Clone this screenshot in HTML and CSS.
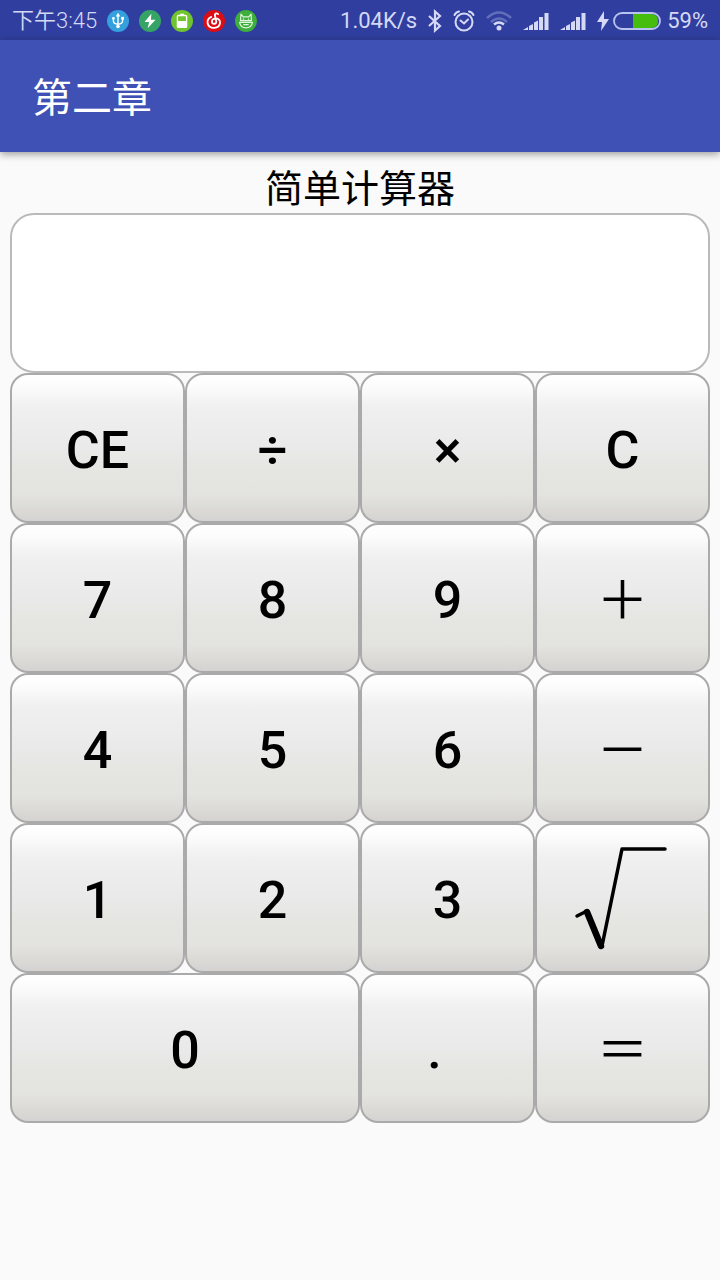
FILE: index.html
```
<!DOCTYPE html>
<html lang="zh-CN">
  <head>
    <meta charset="UTF-8" />
    <meta name="viewport" content="width=device-width, initial-scale=1" />
    <title>第二章</title>
    <link rel="stylesheet" href="styles.css">
  </head>
  <body>
    <div class="status-bar">
      <div class="status-left">
        <span class="clock">下午3:45</span>
        <svg class="app-icon" viewBox="0 0 24 24">
          <circle cx="12" cy="12" r="12" fill="#35a0de" />
          <g fill="none" stroke="#fff" stroke-width="1.5">
            <path d="M12 5v14M7 9v3q0 3 5 3.500q5-.5 5-3.500V9" />
          </g>
          <path d="M12 3l2.500 4h-5z" fill="#fff" />
          <circle cx="12" cy="18" r="2" fill="#fff" />
          <circle cx="7" cy="9" r="1.500" fill="#fff" />
          <path d="M15.500 7.500h3v3h-3z" fill="#fff" />
        </svg>
        <svg class="app-icon" viewBox="0 0 24 24">
          <circle cx="12" cy="12" r="12" fill="#36a465" />
          <path d="M13.500 4L6 13h5l-1.500 7L18 10.500h-5z" fill="#fff" />
        </svg>
        <svg class="app-icon" viewBox="0 0 24 24">
          <circle cx="12" cy="12" r="12" fill="#70c42e" />
          <path d="M10 4h4v2h-4z" fill="#fff" />
          <rect x="7" y="6" width="10" height="13" rx="1" fill="none" stroke="#fff" stroke-width="1.500" />
          <path d="M7 12h10v7H7z" fill="#fff" />
        </svg>
        <svg class="app-icon" viewBox="0 0 24 24">
          <circle cx="12" cy="12" r="12" fill="#dc0d15" />
          <path d="M16.500 4.500c-2-1.500-4-.5-3.500 1.500l1.500 6.500c.6 3-4.500 3.500-4.800.3C9.500 10 13 8.500 16 9.500c4 2 3.500 9.500-3.500 10C4 20 2.500 10.500 9 7.500" fill="none" stroke="#fff" stroke-width="2" stroke-linecap="round" />
        </svg>
        <svg class="app-icon" viewBox="0 0 24 24">
          <circle cx="12" cy="12" r="12" fill="#3eae3c" />
          <path d="M6.500 4.500l2.500 3h6l2.500-3 .5 7H6z M5 13.500h14q-1 6-7 6t-7-6z" fill="none" stroke="#dff5dc" stroke-width="1.300" stroke-linejoin="round" />
          <path d="M8.500 10h1.500M14 10h1.500M9 16h6" stroke="#dff5dc" stroke-width="1.200" />
        </svg>
      </div>
      <div class="status-right">
        <span class="speed">1.04K/s</span>
        <svg class="bluetooth" viewBox="0 0 14 22">
          <path d="M1 6l11 10-5 4.500v-19L12 6 1 16" fill="none" stroke="#d5d9f5" stroke-width="2.200" />
        </svg>
        <svg class="alarm" viewBox="0 0 22 22">
          <g fill="none" stroke="#d5d9f5" stroke-width="2" stroke-linecap="round">
            <circle cx="11" cy="12" r="8.500" />
            <path d="M7.500 10.500L11 13.500l4-4M1.500 5Q3 2 6 1.500M20.500 5Q19 2 16 1.500" />
          </g>
        </svg>
        <svg class="wifi" viewBox="0 0 26 20">
          <g fill="none" stroke="#d5d9f5" stroke-width="2.500">
            <path d="M1 7q12-11 24 0M5 11q8-7 16 0" opacity=".3" />
            <path d="M8 13.500q5-4 10 0" />
          </g>
          <circle cx="13" cy="17" r="2.500" fill="#d5d9f5" />
        </svg>
        <svg class="signal" viewBox="0 0 26 18">
          <path d="M0 18l5-3v3zM6 14l4-2v6H6zM11 10.500l4-2V18h-4zM16 5h4v13h-4zM21.500 1h4v17h-4z" fill="#d5d9f5" />
        </svg>
        <svg class="signal" viewBox="0 0 26 18">
          <path d="M0 18l5-3v3zM6 14l4-2v6H6zM11 10.500l4-2V18h-4zM16 5h4v13h-4zM21.500 1h4v17h-4z" fill="#d5d9f5" />
        </svg>
        <svg class="battery" viewBox="0 0 64 20">
          <path d="M7 0L0 11h5L4 20l8-12H7z" fill="#d5d9f5" />
          <path d="M36 3h18q7 0 7 7t-7 7H36z" fill="#45bd0c" />
          <rect x="17" y="2" width="46" height="16" rx="8" fill="none" stroke="#b9c3f0" stroke-width="1.800" />
        </svg>
        <span class="percent">59%</span>
      </div>
    </div>
    <header class="app-bar">
      <h1>第二章</h1>
    </header>
    <main class="calculator">
      <label class="caption" for="display">简单计算器</label>
      <input class="display" id="display" type="text" readonly />
      <div class="keys">
        <button class="key">CE</button>
        <button class="key">÷</button>
        <button class="key">×</button>
        <button class="key">C</button>
        <button class="key">7</button>
        <button class="key">8</button>
        <button class="key">9</button>
        <button class="key wide-sign">＋</button>
        <button class="key">4</button>
        <button class="key">5</button>
        <button class="key">6</button>
        <button class="key wide-sign">－</button>
        <button class="key">1</button>
        <button class="key">2</button>
        <button class="key">3</button>
        <button class="key" aria-label="平方根">
          <svg class="root" viewBox="0 0 94 106" fill="none" stroke="#000" stroke-linecap="round" stroke-linejoin="round">
            <path d="M1 69l10-5M26 99L46 2h43" stroke-width="3.500" />
            <path d="M11 65l14 34" stroke-width="6.500" />
          </svg>
        </button>
        <button class="key zero">0</button>
        <button class="key">.&nbsp;&nbsp;</button>
        <button class="key wide-sign">＝</button>
      </div>
    </main>
  </body>
</html>
```
FILE: styles.css
```
* {
  box-sizing: border-box;
}
body {
  margin: 0;
  min-height: 100vh;
  background-color: #fafafa;
  font-family: Roboto, "Noto Sans CJK SC", sans-serif;
  color: #000000;
}
svg {
  display: block;
  flex: none;
  overflow: visible;
}
.status-bar {
  display: flex;
  justify-content: space-between;
  align-items: center;
  height: 40px;
  padding: 2px 12px 0;
  background-color: #303f9f;
  color: #d5d9f5;
  font-size: 22px;
  font-weight: 400;
  line-height: 38px;
  white-space: nowrap;
}
.status-left {
  display: flex;
  align-items: center;
  gap: 10px;
}
.status-right {
  display: flex;
  align-items: center;
  gap: 11px;
}
.clock {
  font-weight: 350;
}
.app-icon {
  width: 22px;
  height: 22px;
}
.bluetooth {
  width: 14px;
  height: 22px;
}
.alarm {
  width: 22px;
  height: 22px;
}
.wifi {
  width: 26px;
  height: 20px;
}
.signal {
  width: 26px;
  height: 18px;
}
.battery {
  width: 64px;
  height: 20px;
}
.percent {
  margin-left: -5px;
}
.app-bar {
  display: flex;
  align-items: center;
  height: 112px;
  padding: 0 32px 2px;
  background-color: #3f51b5;
  box-shadow: 0 2px 8px rgba(0, 0, 0, 0.4);
}
.app-bar h1 {
  margin: 0;
  color: #ffffff;
  font-size: 40px;
  font-weight: 400;
}
.calculator {
  display: flex;
  flex-direction: column;
  padding: 14px 10px 10px;
}
.caption {
  font-size: 38px;
  line-height: 47px;
  text-align: center;
}
.display {
  width: 100%;
  height: 160px;
  padding: 10px 20px;
  border: 2px solid #bababa;
  border-radius: 24px;
  background-color: #ffffff;
  font-size: 52px;
  text-align: right;
  outline: none;
}
.keys {
  display: grid;
  grid-template-columns: repeat(4, 1fr);
  grid-auto-rows: 150px;
}
.key {
  display: flex;
  justify-content: center;
  align-items: center;
  padding: 4px 0 0;
  border: 2px solid #aaaaaa;
  border-radius: 18px;
  background: linear-gradient(#ffffff, #fdfdfd 6%, #f0f0f0 22%, #e9e9e9 52%, #e5e5e1 66%, #e3e3df 82%, #d5d3d1);
  color: #000000;
  font-family: Roboto, "Noto Sans CJK SC", sans-serif;
  font-size: 52px;
  font-weight: 500;
}
.wide-sign {
  padding: 0 0 4px;
  font-weight: 400;
}
.zero {
  grid-column: span 2;
}
.root {
  width: 94px;
  height: 106px;
}
```
